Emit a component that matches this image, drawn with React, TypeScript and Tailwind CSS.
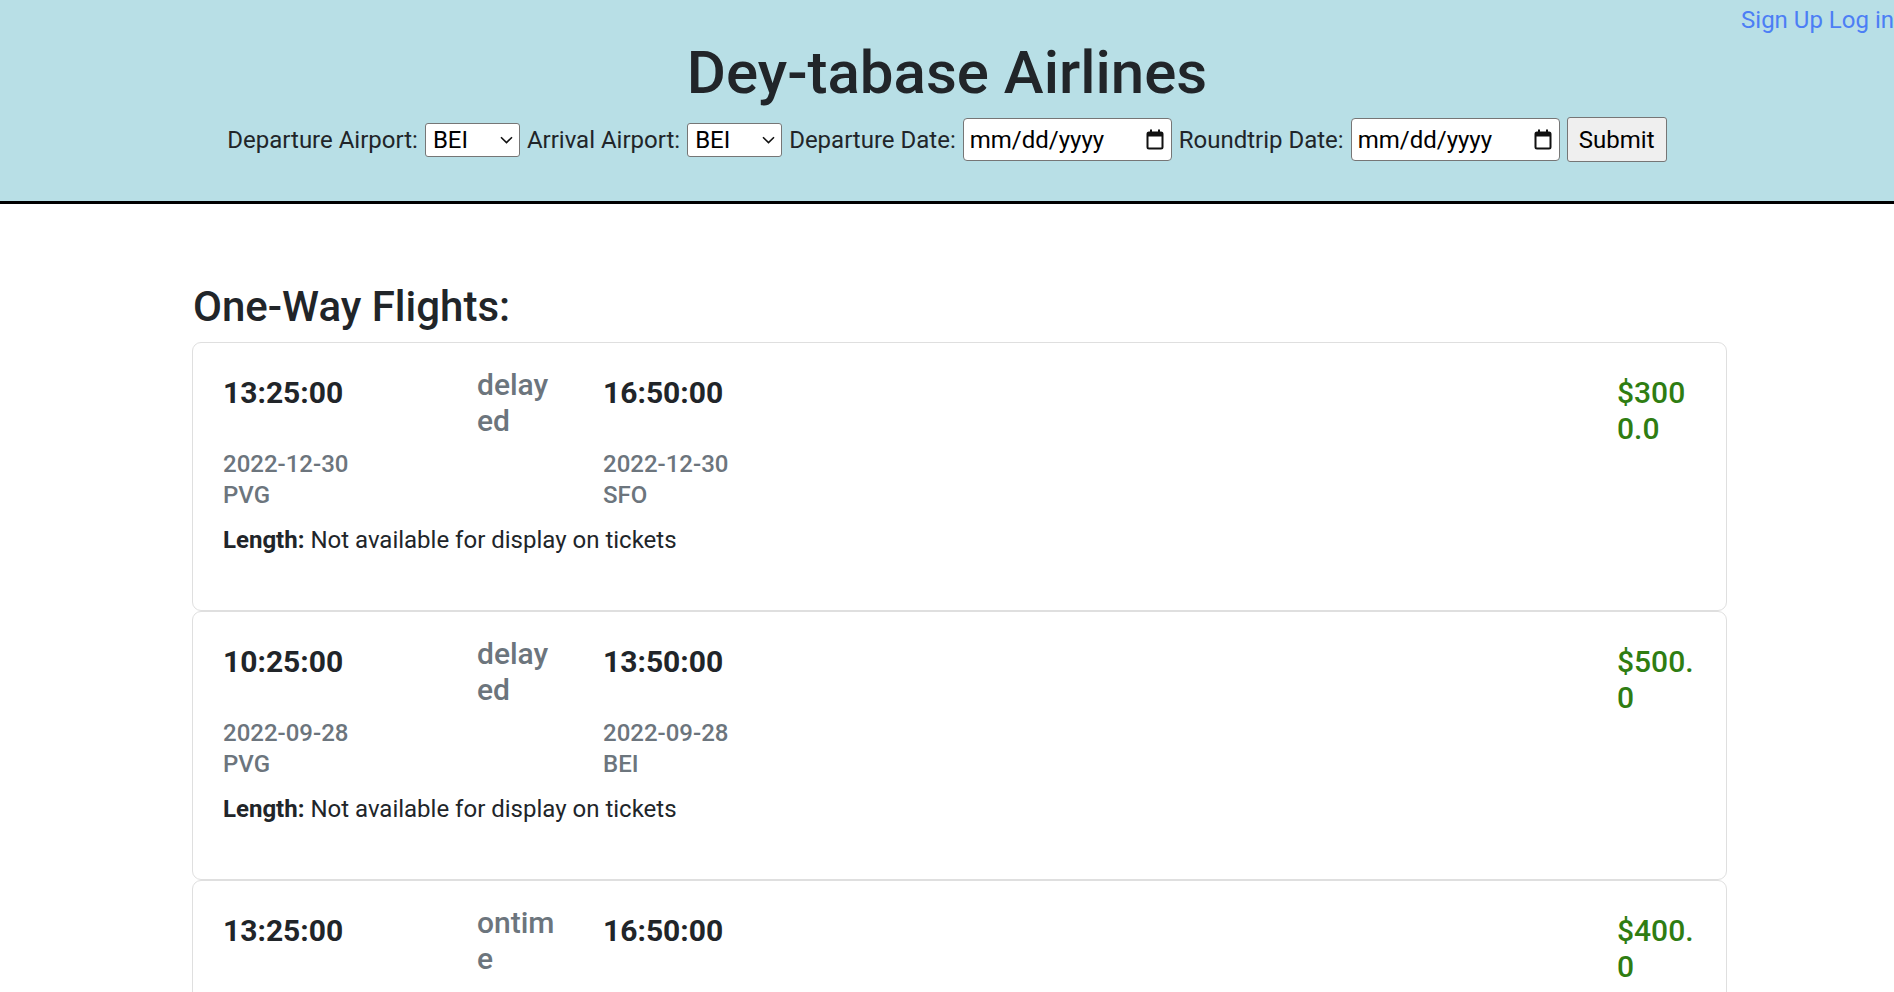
import React from "react";

const flights = [
  { dep: "13:25:00", arr: "16:50:00", status: "delayed", depDate: "2022-12-30", arrDate: "2022-12-30", from: "PVG", to: "SFO", price: "$3000.0" },
  { dep: "10:25:00", arr: "13:50:00", status: "delayed", depDate: "2022-09-28", arrDate: "2022-09-28", from: "PVG", to: "BEI", price: "$500.0" },
  { dep: "13:25:00", arr: "16:50:00", status: "ontime", depDate: "2022-11-14", arrDate: "2022-11-14", from: "SFO", to: "PVG", price: "$400.0" },
];

function FakeSelect() {
  return (
    <div className="flex h-[34px] w-[95px] items-center justify-between rounded-[3px] border border-[#767676] bg-white pl-[7px] pr-[6px] text-black">
      <span>BEI</span>
      <svg width="13" height="8" viewBox="0 0 13 8" fill="none">
        <path d="M1 1.2 L6.5 6.6 L12 1.2" stroke="#111" strokeWidth="1.6" />
      </svg>
    </div>
  );
}

function DateBox() {
  return (
    <div className="flex h-[43px] w-[209px] items-center justify-between rounded-[4px] border border-[#767676] bg-white pl-[6px] pr-[7px] text-black">
      <span>mm/dd/yyyy</span>
      <svg width="18" height="21" viewBox="0 0 18 21" fill="none">
        <rect x="1.5" y="3.5" width="15" height="16" rx="1.5" stroke="#111" strokeWidth="2" />
        <rect x="1.5" y="3.5" width="15" height="4" fill="#111" />
        <rect x="4" y="0.5" width="2" height="4" fill="#111" />
        <rect x="12" y="0.5" width="2" height="4" fill="#111" />
      </svg>
    </div>
  );
}

function FlightCard({ f }: { f: (typeof flights)[number] }) {
  return (
    <div className="h-[269px] rounded-[9px] border border-[#dfdfdf] bg-white pl-[30px] pr-[29px] pt-6">
      <div className="flex h-[72px]">
        <div className="w-[254px] pt-2 text-[30px] font-bold leading-9">{f.dep}</div>
        <div className="w-[126px]">
          <div className="w-[82px] break-all text-[30px] font-medium leading-9 text-[#6c757d]">{f.status}</div>
        </div>
        <div className="flex-1 pt-2 text-[30px] font-bold leading-9">{f.arr}</div>
        <div className="w-[80px] break-all pt-2 text-[30px] font-medium leading-9 text-[#2f7d12]">{f.price}</div>
      </div>
      <div className="mt-[10px] flex text-[24px] font-medium leading-[31px] text-[#6c757d]">
        <div className="w-[380px]">
          <div>{f.depDate}</div>
          <div>{f.from}</div>
        </div>
        <div>
          <div>{f.arrDate}</div>
          <div>{f.to}</div>
        </div>
      </div>
      <p className="mt-[11px] text-[24px] leading-9">
        <b>Length:</b> Not available for display on tickets
      </p>
    </div>
  );
}

export default function App() {
  return (
    <div className="min-h-screen bg-white font-['Roboto',sans-serif] text-[#212529]">
      <header className="border-b-[3px] border-black bg-[#b8dfe6] pb-[39px]">
        <div className="flex h-[37px] justify-end gap-[6px] pt-[2px] text-[24px] leading-9">
          <a href="#" className="text-[#4c7ef5]">Sign Up</a>
          <a href="#" className="text-[#4c7ef5]">Log in</a>
        </div>
        <h1 className="text-center text-[60px] font-medium leading-[72px]">Dey-tabase Airlines</h1>
        <form className="mt-2 flex items-center justify-center gap-[7px] text-[24px] leading-9">
          <span>Departure Airport:</span>
          <FakeSelect />
          <span>Arrival Airport:</span>
          <FakeSelect />
          <span>Departure Date:</span>
          <DateBox />
          <span>Roundtrip Date:</span>
          <DateBox />
          <button type="button" className="h-[45px] w-[100px] rounded-[3px] border border-[#767676] bg-[#efefef] text-black">
            Submit
          </button>
        </form>
      </header>

      <main className="pl-[192px] pt-[78px]">
        <h3 className="mb-[10px] pl-px text-[42px] font-medium leading-[50px]">One-Way Flights:</h3>
        <div className="w-[1535px]">
          {flights.map((f, i) => (
            <FlightCard key={i} f={f} />
          ))}
        </div>
      </main>
    </div>
  );
}
